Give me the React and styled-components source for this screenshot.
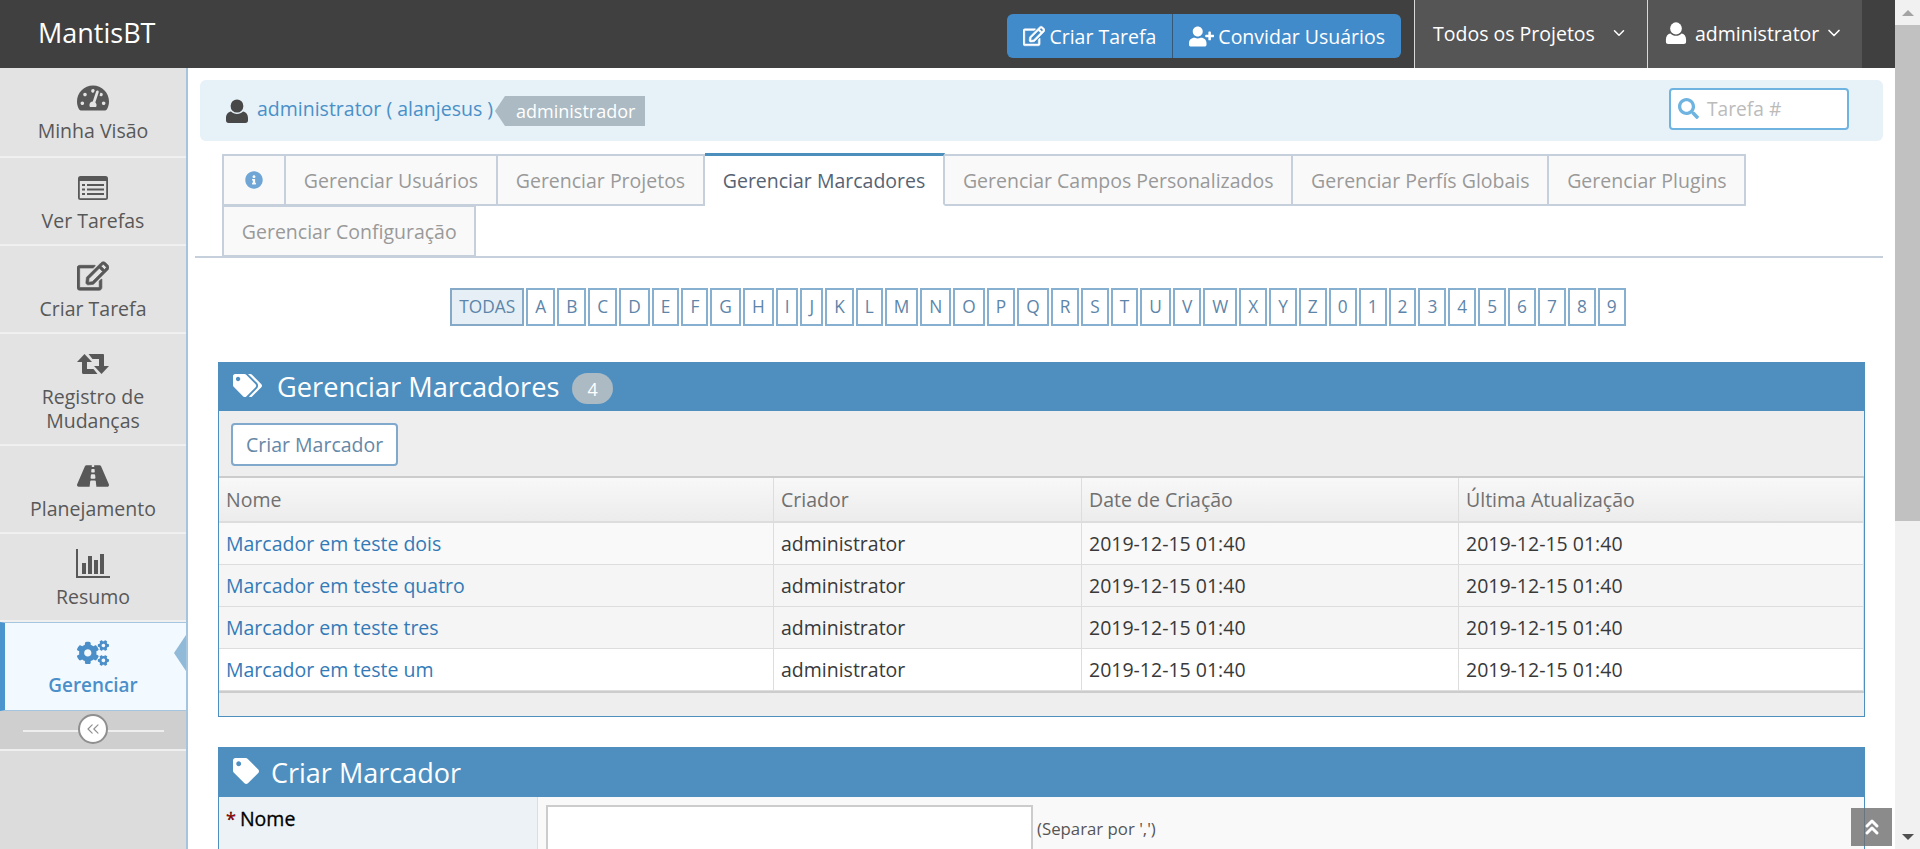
import React from 'react';
import styled, { createGlobalStyle } from 'styled-components';
import { FaTachometerAlt, FaRegEdit, FaRoad, FaCogs, FaInfoCircle, FaTags, FaTag, FaUserPlus, FaSearch } from 'react-icons/fa';
import { ChevronDown, ChevronsLeft, ChevronsUp } from 'lucide-react';

const Global = createGlobalStyle`
  html, body { margin: 0; padding: 0; height: 849px; overflow: hidden; background: #fff; }
  * { box-sizing: border-box; }
  body { font-family: "Open Sans", "Liberation Sans", sans-serif; font-size: 19.5px; color: #393939; }
`;
const Page = styled.div`display: flex; width: 1920px; height: 849px; overflow: hidden;`;
const Viewport = styled.div`flex: 1; min-width: 0; display: flex; flex-direction: column;`;
const Scrollbar = styled.div`width: 25px; background: #f1f1f1; display: flex; flex-direction: column; align-items: center;`;
const ScrollArrow = styled.div`height: 25px; width: 100%; display: flex; align-items: center; justify-content: center;`;
const ArrowGlyph = styled.div`
  width: 0; height: 0; border-left: 6px solid transparent; border-right: 6px solid transparent;
  ${p => p.$up ? 'border-bottom: 6px solid #a3a3a3;' : 'border-top: 6px solid #505050;'}
`;
const ScrollThumb = styled.div`width: 100%; height: 496px; background: #c1c1c1;`;
const ScrollGap = styled.div`flex: 1;`;

const TopBar = styled.header`height: 68px; background: #404040; display: flex; align-items: stretch; flex: none; padding-right: 33px;`;
const Brand = styled.div`color: #fff; font-size: 27px; padding: 15px 0 0 38px; flex: 1; line-height: 36px;`;
const ActionGroup = styled.div`display: flex; height: 44px; margin: 14px 13px 0 0; border-radius: 6px; overflow: hidden; background: #428bca;`;
const ActionButton = styled.div`
  color: #fff; font-size: 19.5px; display: flex; align-items: center; gap: 4px; padding: 0 16px;
  ${p => !p.$first && 'border-left: 1px solid #36597a;'}
  svg { font-size: ${p => p.$first ? 22 : 25}px; flex: none; }
`;
const NavMenu = styled.div`
  background: #555; color: #fff; font-size: 19.5px; border-left: 1px solid #d8d8d8; display: flex; align-items: center;
  padding-bottom: 2px; width: ${p => p.$w}px; padding-left: ${p => p.$pl}px; gap: ${p => p.$gap}px;
`;
const NavUserLabel = styled.span`margin-left: 3px;`;

const Body = styled.div`flex: 1; display: flex; min-height: 0;`;
const Sidebar = styled.nav`width: 188px; flex: none; background: #dcdcdc; border-right: 2px solid #a5c5de; display: flex; flex-direction: column;`;
const SideItem = styled.div`
  height: ${p => p.$h}px; flex: none; display: flex; flex-direction: column; align-items: center; 
  text-align: center; padding: 15px 20px 0; position: relative; font-size: ${p => p.$active ? 18.9 : 19.5}px; line-height: 24px;
  background: ${p => p.$active ? '#f2f9ff' : '#e3e3e3'};
  color: ${p => p.$active ? '#4b8fc9' : '#585858'};
  font-weight: ${p => p.$active ? 600 : 400};
  border-bottom: ${p => p.$active ? '1px solid #a5c5de' : '2px solid #f0f0f0'};
  ${p => p.$active && 'border-left: 5px solid #4b95ce; border-top: 1px solid #a5c5de; padding-left: 15px;'}
  svg { font-size: 32px; height: 30px; margin-bottom: ${p => p.$active ? 5 : 6}px; flex: none; }
`;
const SideCaret = styled.div`
  position: absolute; right: 0; top: 12px; width: 0; height: 0;
  border-top: 18px solid transparent; border-bottom: 18px solid transparent; border-right: 12px solid #91b9d8;
`;
const Collapse = styled.div`height: 40px; flex: none; background: #cfcfcf; border-bottom: 2px solid #efefef; display: flex; align-items: center; justify-content: center; position: relative;`;
const CollapseLine = styled.div`position: absolute; left: 23px; right: 22px; top: 19px; height: 2px; background: #eee;`;
const CollapseBtn = styled.div`
  width: 30px; height: 30px; border-radius: 50%; border: 2px solid #8f8f8f; background: #fff; color: #909090; margin-top: -2px;
  display: flex; align-items: center; justify-content: center; position: relative;
`;

const Main = styled.main`flex: 1; min-width: 0; padding: 12px 12px 0 7px; position: relative; overflow: hidden;`;
const UserBar = styled.div`
  height: 61px; margin-left: 5px; background: #e6f1f8; border-radius: 6px; display: flex; align-items: center; padding: 0 34px 0 25px; 
`;
const UserLink = styled.span`color: #4a90c8; font-size: 19.5px; line-height: 24px; margin-bottom: 3px; margin-left: 8px;`;
const RoleTag = styled.span`
  position: relative; margin-left: 12px; background: #abbac3; color: #fff; font-size: 18px; height: 30px; line-height: 30px; padding: 0 10px 0 11px; display: inline-block;
  &::before { content: ''; position: absolute; left: -10px; top: 0; border-top: 15px solid transparent; border-bottom: 15px solid transparent; border-right: 10px solid #abbac3; }
`;
const Spacer = styled.div`flex: 1;`;
const SearchBox = styled.div`
  width: 180px; height: 42px; border: 2px solid #6fb3e0; border-radius: 4px; background: #fff; display: flex; align-items: center; padding: 0 0 2px 7px; gap: 8px;
  color: #bbb; font-size: 19.2px; margin-top: -3px;
  svg { color: #6fb3e0; font-size: 21px; }
`;

const TabsArea = styled.div`margin-top: 13px; border-bottom: 2px solid #c5d0dc; padding-left: 27px; display: flex; flex-wrap: wrap; width: 1688px;`;
const Tab = styled.div`
  height: 52px; background: ${p => p.$active ? '#fff' : '#f9f9f9'}; color: ${p => p.$active ? '#576373' : '#999'};
  border: 2px solid #c5d0dc; border-left-width: ${p => p.$first ? 2 : 0}px; margin-bottom: -1px; padding: 0 17.8px; display: flex; align-items: center; font-size: 19.5px; 
  ${p => p.$active && 'border-top: 3px solid #4c8fbd; border-bottom-color: #fff; margin-top: -1px; height: 53px;'}
  ${p => p.$info && 'color: #6fa6d6; padding: 0 21px; svg{font-size:18px}'}
`;
const Letters = styled.div`display: flex; justify-content: center; gap: 2px; margin-top: 30px; width: 1686px;`;
const Letter = styled.div`
  height: 38px; padding: 0 7px; border: 2px solid ${p => p.$active ? '#87a9c8' : '#87b0d0'}; background: ${p => p.$active ? '#e6eff6' : '#fff'};
  color: #5d85a9; font-size: 17.3px; line-height: 34px;
`;

const Widget = styled.section`margin: ${p => p.$mt}px 0 0 23px; width: 1647px; border: 1px solid #4f8fc0; border-top: 0;`;
const WidgetHead = styled.div`
  height: ${p => p.$h}px; margin: 0 -1px; background: #4f8fc0; color: #fff; font-size: ${p => p.$fs}px; display: flex; align-items: center; padding-left: 15px;
`;
const HeadIcon = styled.span`display: flex; font-size: ${p => p.$size}px; margin-right: ${p => p.$mr}px; margin-top: -3px;`;
const CountBadge = styled.span`background: #abbac3; color: #fff; border-radius: 18px; font-size: 18px; height: 31px; padding: 0 15px; margin-left: 13px; line-height: 33px; margin-top: 3px;`;
const Toolbar = styled.div`height: 67px; background: #eee; padding: 12px; border-bottom: 2px solid #ccc;`;
const OutlineButton = styled.div`
  display: inline-flex; align-items: center; justify-content: center; height: 43px; padding: 0 13px; border: 2px solid #80a9cc; border-radius: 4px; background: #fff; color: #6688a6; font-size: 19.5px; 
`;
const Table = styled.div`display: grid; grid-template-columns: 555px 308px 377px 1fr;`;
const HeadCell = styled.div`
  height: 45px; padding: 0 7px; display: flex; align-items: center; color: #707070; font-size: 19.5px; border-right: 1px solid #ddd; border-bottom: 2px solid #ddd;
  background: linear-gradient(#f8f8f8, #ececec);
`;
const Cell = styled.div`
  height: 42px; padding: 0 7px; display: flex; align-items: center; font-size: 19.5px; color: #393939; border-right: 1px solid #ddd; border-bottom: 1px solid #ddd;
  background: ${p => p.$alt ? '#fff' : p.$first ? '#f9f9f9' : '#f5f5f5'};
`;
const TagLink = styled.span`color: #337ab7;`;
const WidgetFoot = styled.div`height: 25px; background: #eee; border-top: 2px solid #ccc;`;
const FormRow = styled.div`display: grid; grid-template-columns: 319px 1fr; height: 60px;`;
const FormLabel = styled.div`background: #edf2f6; padding: 8px 7px; color: #000; font-size: 19.5px; font-weight: 400; -webkit-text-stroke: 0.3px #000; border-right: 1px solid #ddd;`;
const Required = styled.span`color: #bd0000; margin-right: 4px; font-size: 18px;`;
const FormField = styled.div`background: #f9f9f9; padding: 8px 0 0 8px; display: flex; gap: 4px;`;
const TextInput = styled.div`width: 487px; height: 60px; background: #fff; border: 2px solid #ccc; flex: none;`;
const Hint = styled.span`font-size: 16.8px; color: #555; margin-top: 12px;`;
const ToTop = styled.div`
  position: absolute; right: 3px; bottom: 3px; width: 41px; height: 38px; background: rgba(110,110,110,0.8); color: #fff;
  display: flex; align-items: center; justify-content: center;
`;

const PersonIcon = ({ size = 24, color = 'currentColor' }) => (
  <svg width={size} height={size} viewBox="0 0 24 24" fill={color} style={{ flex: 'none' }}>
    <ellipse cx="12" cy="7" rx="6.4" ry="6.6" />
    <path d="M6 12.5c1.5 1.6 3.6 2.5 6 2.5s4.500-.9 6-2.500c2.800.4 5 2.800 5 6.500v2.500c0 1.400-1 2.500-2.500 2.500h-17C2 24 1 22.900 1 21.500V19c0-3.700 2.200-6.100 5-6.500z" />
  </svg>
);
const BarsIcon = () => (
  <svg width="34" height="30" viewBox="0 0 34 30" fill="currentColor">
    <path d="M0 0h2v27h32v2H0z" />
    <path d="M6 14h4v11H6zM12 7h4v18h-4zM18 11h4v14h-4zM24 5h4v20h-4z" />
  </svg>
);
const ListPanelIcon = () => (
  <svg width="30" height="30" viewBox="0 0 30 30">
    <rect x="0" y="3" width="30" height="24" rx="2.5" fill="#585858" />
    <rect x="1.800" y="8" width="26.400" height="17.200" fill="#e3e3e3" />
    <path d="M4 11h3v2H4zM9 11h17v2H9zM4 15.500h3v2H4zM9 15.500h17v2H9zM4 20h3v2H4zM9 20h17v2H9z" fill="#585858" />
  </svg>
);
const RetweetIcon = () => (
  <svg width="32" height="30" viewBox="0 -5 32 30" fill="currentColor">
    <path d="M7.500 0L15 8h-5v7h6.500l4 5H6.500A1.500 1.500 0 0 1 5 18.500V8H0z" />
    <path d="M24.500 20L17 12h5V5h-6.500l-4-5h15A1.500 1.500 0 0 1 27 1.500V12h5z" />
  </svg>
);

const sideItems = [
  ['Minha Visão', <FaTachometerAlt key="a" />, 90],
  ['Ver Tarefas', <ListPanelIcon key="b" />, 88],
  ['Criar Tarefa', <FaRegEdit key="c" strokeWidth={12} />, 88],
  ['Registro de Mudanças', <RetweetIcon key="d" />, 112],
  ['Planejamento', <FaRoad key="e" />, 88],
  ['Resumo', <BarsIcon key="f" />, 88],
];
const tabsRow = ['Gerenciar Usuários', 'Gerenciar Projetos', 'Gerenciar Marcadores', 'Gerenciar Campos Personalizados', 'Gerenciar Perfís Globais', 'Gerenciar Plugins'];
const letters = 'ABCDEFGHIJKLMNOPQRSTUVWXYZ0123456789'.split('');
const rows = ['Marcador em teste dois', 'Marcador em teste quatro', 'Marcador em teste tres', 'Marcador em teste um'];

export default function App() {
  return (
    <Page>
      <Global />
      <Viewport>
        <TopBar>
          <Brand>MantisBT</Brand>
          <ActionGroup>
            <ActionButton $first><FaRegEdit strokeWidth={12} />Criar Tarefa</ActionButton>
            <ActionButton><FaUserPlus />Convidar Usuários</ActionButton>
          </ActionGroup>
          <NavMenu $w={233} $pl={18} $gap={15}>Todos os Projetos <ChevronDown size={18} strokeWidth={2} /></NavMenu>
          <NavMenu $w={215} $pl={17} $gap={5}><PersonIcon size={22} /><NavUserLabel>administrator</NavUserLabel> <ChevronDown size={20} strokeWidth={2} /></NavMenu>
        </TopBar>
        <Body>
          <Sidebar>
            {sideItems.map(([label, icon, h]) => (
              <SideItem key={label} $h={h}>{icon}{label}</SideItem>
            ))}
            <SideItem $h={89} $active><FaCogs /><span>Gerenciar</span><SideCaret /></SideItem>
            <Collapse>
              <CollapseLine />
              <CollapseBtn><ChevronsLeft size={20} strokeWidth={1.4} /></CollapseBtn>
            </Collapse>
          </Sidebar>
          <Main>
            <UserBar>
              <PersonIcon size={24} color="#484848" />
              <UserLink>administrator ( alanjesus )</UserLink>
              <RoleTag>administrador</RoleTag>
              <Spacer />
              <SearchBox><FaSearch />Tarefa #</SearchBox>
            </UserBar>
            <TabsArea>
              <Tab $first $info><FaInfoCircle /></Tab>
              {tabsRow.map((t, i) => <Tab key={t} $active={i === 2}>{t}</Tab>)}
              <Tab $first>Gerenciar Configuração</Tab>
            </TabsArea>
            <Letters>
              <Letter $active>TODAS</Letter>
              {letters.map(l => <Letter key={l}>{l}</Letter>)}
            </Letters>
            <Widget $mt={36}>
              <WidgetHead $h={49} $fs={27.2}>
                <HeadIcon $size={29} $mr={15}><FaTags /></HeadIcon>Gerenciar Marcadores<CountBadge>4</CountBadge>
              </WidgetHead>
              <Toolbar><OutlineButton>Criar Marcador</OutlineButton></Toolbar>
              <Table>
                {['Nome', 'Criador', 'Date de Criação', 'Última Atualização'].map(h => <HeadCell key={h}>{h}</HeadCell>)}
                {rows.map((r, i) => (
                  <React.Fragment key={r}>
                    <Cell $first={i === 0} $alt={i === 3}><TagLink>{r}</TagLink></Cell>
                    <Cell $first={i === 0} $alt={i === 3}>administrator</Cell>
                    <Cell $first={i === 0} $alt={i === 3}>2019-12-15 01:40</Cell>
                    <Cell $first={i === 0} $alt={i === 3}>2019-12-15 01:40</Cell>
                  </React.Fragment>
                ))}
              </Table>
              <WidgetFoot />
            </Widget>
            <Widget $mt={30}>
              <WidgetHead $h={50} $fs={27}>
                <HeadIcon $size={26} $mr={12}><FaTag /></HeadIcon>Criar Marcador
              </WidgetHead>
              <FormRow>
                <FormLabel><Required>*</Required>Nome</FormLabel>
                <FormField><TextInput /><Hint>(Separar por ',')</Hint></FormField>
              </FormRow>
            </Widget>
            <ToTop><ChevronsUp size={24} strokeWidth={3} /></ToTop>
          </Main>
        </Body>
      </Viewport>
      <Scrollbar>
        <ScrollArrow><ArrowGlyph $up /></ScrollArrow>
        <ScrollThumb />
        <ScrollGap />
        <ScrollArrow><ArrowGlyph /></ScrollArrow>
      </Scrollbar>
    </Page>
  );
}
